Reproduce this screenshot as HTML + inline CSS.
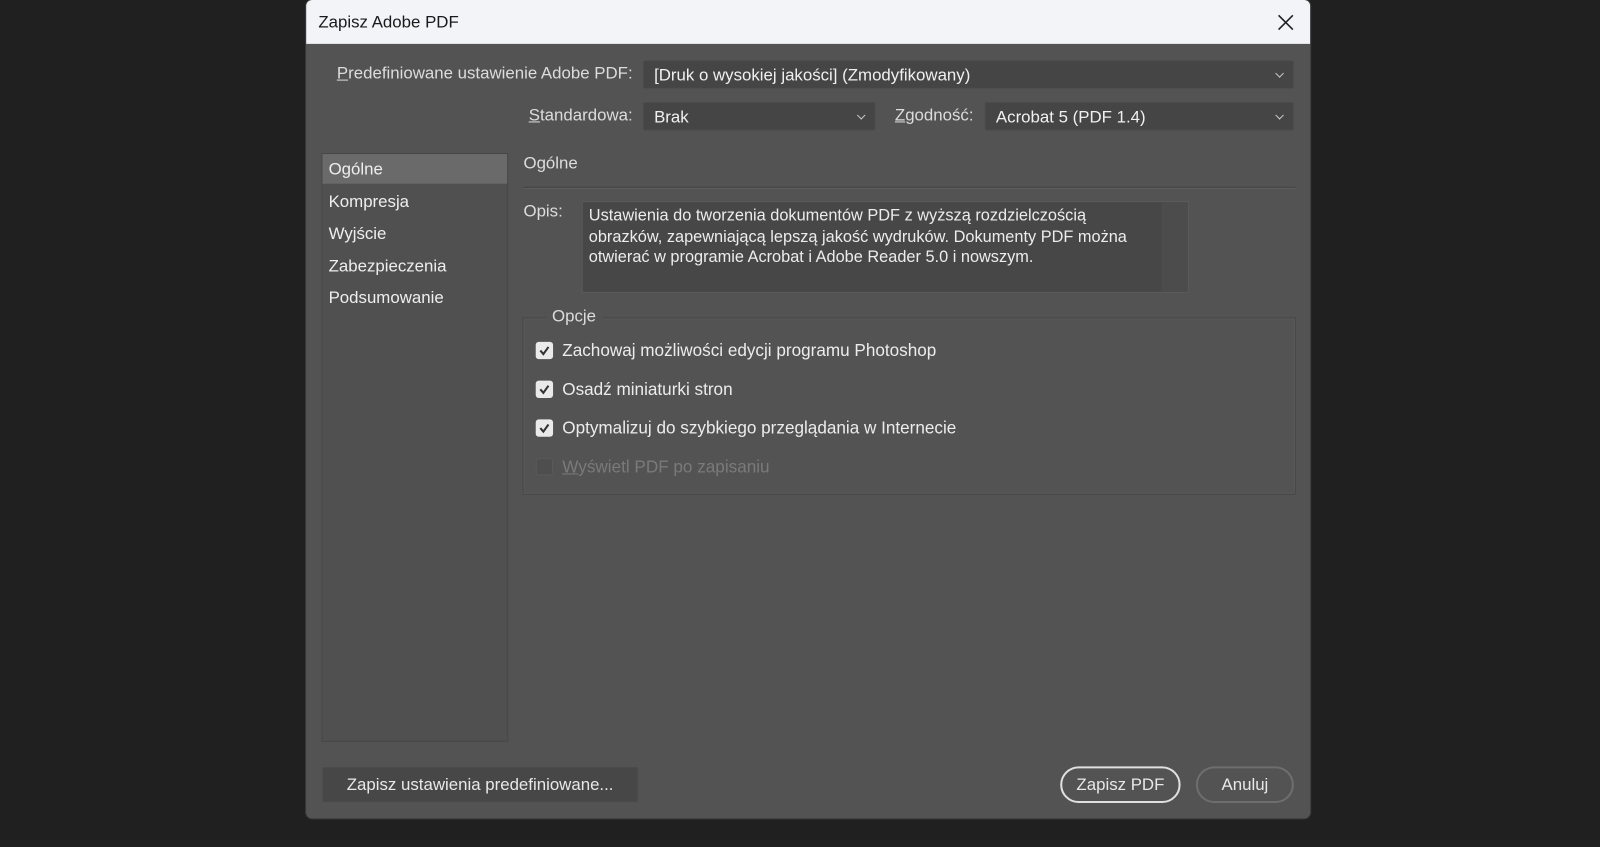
<!DOCTYPE html>
<html><head><meta charset="utf-8"><style>
*{margin:0;padding:0;box-sizing:border-box}
body{width:1600px;height:847px;background:#202020;overflow:hidden;font-family:"Liberation Sans",sans-serif;color:#e8e8e8}
#w{position:absolute;left:0;top:0;width:1568px;height:830px;transform:scale(1.020408);transform-origin:0 0}
.a{position:absolute;white-space:nowrap}
#dlg{position:absolute;left:300px;top:0;width:984px;height:802px;background:#535353;border-radius:6px;overflow:hidden;box-shadow:0 0 0 1px #3a3a3a}
#tb{position:absolute;left:0;top:0;width:984px;height:43px;background:#f3f4f8;color:#1a1a1a}
.dd{position:absolute;background:#454545;border:1px solid #4c4c4c;border-radius:2px;font-size:16.5px;color:#f0f0f0;padding:5px 10px;height:28px}
.dd:after{content:"";position:absolute;right:10px;top:9px;width:5px;height:5px;border-right:1.3px solid #ccc;border-bottom:1.3px solid #ccc;transform:rotate(45deg)}
.lb{font-size:16.5px;color:#dcdcdc}
.it{position:absolute;left:6px;font-size:16.5px;color:#eee}
.cb{position:absolute;left:12px;width:17px;height:17px;background:#eaeaea;border-radius:3px}
.cb svg{position:absolute;left:2px;top:2px}
.ct{position:absolute;left:38px;font-size:16.8px;color:#ececec}
.btn{position:absolute;font-size:16.5px;text-align:center;line-height:32px}
</style></head><body><div id="w">
<div id="dlg">
 <div id="tb"><div class="a" style="left:12px;top:13px;font-size:16.5px">Zapisz Adobe PDF</div>
  <svg class="a" style="left:952px;top:14px" width="16" height="16"><path d="M1 1L15 15M15 1L1 15" stroke="#222" stroke-width="1.6"/></svg></div>
 <div class="a lb" style="right:664px;top:63px"><u>P</u>redefiniowane ustawienie Adobe PDF:</div>
 <div class="dd" style="left:330px;top:59px;width:638px">[Druk o wysokiej jakości] (Zmodyfikowany)</div>
 <div class="a lb" style="right:664px;top:104px"><u>S</u>tandardowa:</div>
 <div class="dd" style="left:330px;top:100px;width:228px">Brak</div>
 <div class="a lb" style="left:577px;top:104px"><u>Z</u>godność:</div>
 <div class="dd" style="left:665px;top:100px;width:303px">Acrobat 5 (PDF 1.4)</div>
 <div class="a" style="left:15px;top:150px;width:183px;height:577px;background:#505050;border:1px solid #474747">
  <div class="a" style="left:0;top:0;width:181px;height:29px;background:#6a6a6a"></div>
  <div class="it" style="top:6px">Ogólne</div>
  <div class="it" style="top:38px">Kompresja</div>
  <div class="it" style="top:69px">Wyjście</div>
  <div class="it" style="top:101px">Zabezpieczenia</div>
  <div class="it" style="top:132px">Podsumowanie</div>
 </div>
 <div class="a lb" style="left:213px;top:151px">Ogólne</div>
 <div class="a" style="left:213px;top:183px;width:757px;height:1px;background:#444;box-shadow:0 1px 0 #5e5e5e"></div>
 <div class="a lb" style="left:213px;top:198px">Opis:</div>
 <div class="a" style="left:270px;top:197px;width:595px;height:90px;background:#474747;border:1px solid #5c5c5c;font-size:16px;line-height:20.5px;color:#ececec;padding:4px 6px;white-space:normal">
  <div class="a" style="right:0;top:0;width:26px;height:88px;background:#4c4c4c"></div>
  Ustawienia do tworzenia dokumentów PDF z wyższą rozdzielczością<br>obrazków, zapewniającą lepszą jakość wydruków. Dokumenty PDF można<br>otwierać w programie Acrobat i Adobe Reader 5.0 i nowszym.</div>
 <div class="a" style="left:212px;top:311px;width:758px;height:174px;border:1px solid #474747;box-shadow:inset 0 0 0 1px #5a5a5a">
  <div class="a lb" style="left:22px;top:-11px;background:#535353;padding:0 6px">Opcje</div>
  <div class="cb" style="top:23px"><svg width="13" height="13"><path d="M2.5 6.5L5.5 10L10.5 3" fill="none" stroke="#333" stroke-width="2"/></svg></div>
  <div class="ct" style="top:22px">Zachowaj możliwości edycji programu Photoshop</div>
  <div class="cb" style="top:61px"><svg width="13" height="13"><path d="M2.5 6.5L5.5 10L10.5 3" fill="none" stroke="#333" stroke-width="2"/></svg></div>
  <div class="ct" style="top:60px">Osadź miniaturki stron</div>
  <div class="cb" style="top:99px"><svg width="13" height="13"><path d="M2.5 6.5L5.5 10L10.5 3" fill="none" stroke="#333" stroke-width="2"/></svg></div>
  <div class="ct" style="top:98px">Optymalizuj do szybkiego przeglądania w Internecie</div>
  <div class="cb" style="top:137px;background:#4e4e4e;border:1px solid #5a5a5a"></div>
  <div class="ct" style="top:136px;color:#7a7a7a"><u>W</u>yświetl PDF po zapisaniu</div>
 </div>
 <div class="btn" style="left:16px;top:752px;width:309px;height:34px;background:#474747;border:1px solid #4a4a4a;padding-left:0">Zapisz ustawienia predefiniowane...</div>
 <div class="btn" style="left:739px;top:751px;width:118px;height:36px;border:2px solid #e0e0e0;border-radius:18px;line-height:33px">Zapisz PDF</div>
 <div class="btn" style="left:872px;top:751px;width:96px;height:36px;border:2px solid #6e6e6e;border-radius:18px;line-height:33px">Anuluj</div>
</div>
</div></body></html>
